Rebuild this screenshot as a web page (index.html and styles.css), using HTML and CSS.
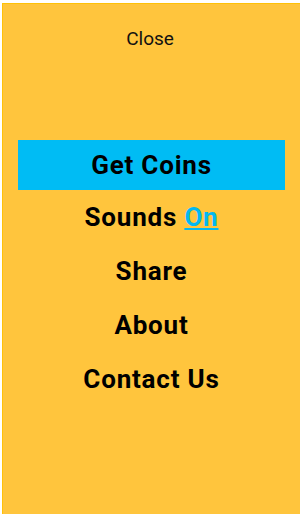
FILE: index.html
```html
<!DOCTYPE html>
<html>
<head>
    <meta name="viewport" content="width=device-width, initial-scale=1">
    <link rel="stylesheet" href="styles.css">
</head>
<body>
    <div id="drawer" class="drawer">
        <a href="#" class="close-btn">Close</a>
        <ul class="menu-list">
            <li class="menu-item active"><a href="#">Get Coins</a></li>
            <li class="menu-item"><a href="#">Sounds <span class="toggle">On</span></a></li>
            <li class="menu-item"><a href="#">Share</a></li>
            <li class="menu-item"><a href="#">About</a></li>
            <li class="menu-item"><a href="#">Contact Us</a></li>
        </ul>
    </div>
</body>
</html>
```

FILE: styles.css
```css
html, body {
    margin: 0;
    padding: 0;
    background-color: white;
}

.drawer {
    margin: 3px 0 0 2px;
    height: 511px;
    box-sizing: border-box;
    border-top: 1px solid #ffc107;
    border-left: 1px solid #ffc107;
    background-color: #ffc53d;
    font-family: Roboto, "Liberation Sans", sans-serif;
    color: black;
}

.close-btn {
    display: block;
    padding: 24px 3px 0 0;
    text-align: center;
    font-size: 19px;
    line-height: 22px;
    color: #111;
    text-decoration: none;
}

ul, li {margin: 0; padding: 0; list-style: none;}

.menu-list {
    margin-top: 90px;
    padding: 0 15px 0 15px;
}

.menu-item {
    height: 54px;
    display: flex;
    align-items: center;
    justify-content: center;
    font-size: 26px;
    letter-spacing: 0.8px;
    font-weight: bold;
}

.menu-item a {
    color: black;
    text-decoration: none;
}

.menu-item.active {
    height: 50px;
    background-color: #00bcf4;
}

.toggle {
    color: #03b8f0;
    text-decoration: underline;
}
```
